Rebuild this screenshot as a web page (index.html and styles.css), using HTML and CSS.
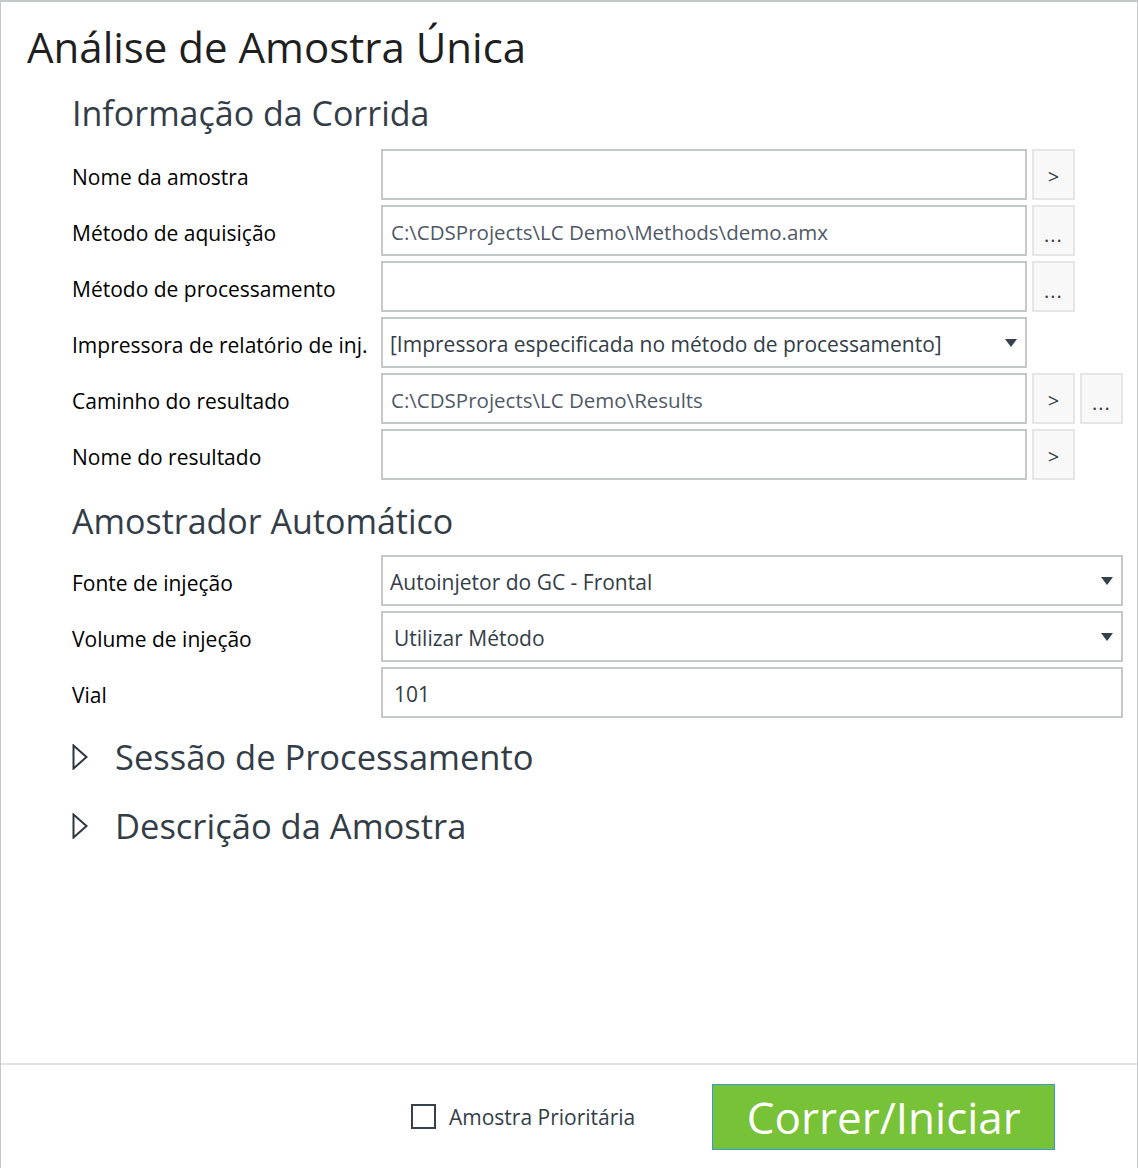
FILE: index.html
```html
<!DOCTYPE html>
<html lang="pt">
<head>
<meta charset="utf-8">
<link rel="stylesheet" href="styles.css">
</head>
<body>
<div class="window">
  <main class="content">
    <h1 class="title">Análise de Amostra Única</h1>
    <section class="section">
      <h2 class="heading">Informação da Corrida</h2>
      <div class="rows">
        <div class="row">
          <label class="label">Nome da amostra</label>
          <div class="field"></div>
          <button class="btn">&gt;</button>
        </div>
        <div class="row">
          <label class="label">Método de aquisição</label>
          <div class="field muted">C:\CDSProjects\LC Demo\Methods\demo.amx</div>
          <button class="btn dots">...</button>
        </div>
        <div class="row">
          <label class="label">Método de processamento</label>
          <div class="field"></div>
          <button class="btn dots">...</button>
        </div>
        <div class="row">
          <label class="label">Impressora de relatório de inj.</label>
          <div class="field select tight">[Impressora especificada no método de processamento]<span class="caret"></span></div>
        </div>
        <div class="row">
          <label class="label">Caminho do resultado</label>
          <div class="field muted">C:\CDSProjects\LC Demo\Results</div>
          <button class="btn">&gt;</button>
          <button class="btn dots">...</button>
        </div>
        <div class="row">
          <label class="label">Nome do resultado</label>
          <div class="field"></div>
          <button class="btn">&gt;</button>
        </div>
      </div>
    </section>
    <section class="section second">
      <h2 class="heading">Amostrador Automático</h2>
      <div class="rows">
        <div class="row">
          <label class="label">Fonte de injeção</label>
          <div class="field wide select tight">Autoinjetor do GC - Frontal<span class="caret"></span></div>
        </div>
        <div class="row">
          <label class="label">Volume de injeção</label>
          <div class="field wide select">Utilizar Método<span class="caret"></span></div>
        </div>
        <div class="row">
          <label class="label">Vial</label>
          <div class="field wide">101</div>
        </div>
      </div>
    </section>
    <div class="expander first">
      <svg class="tri" width="16" height="26" viewBox="0 0 16 26"><path d="M1.5 1.5 L14.5 13 L1.5 24.5 Z" fill="none" stroke="#2d3640" stroke-width="2" stroke-linejoin="miter"/></svg>
      <span class="exp-text">Sessão de Processamento</span>
    </div>
    <div class="expander">
      <svg class="tri" width="16" height="26" viewBox="0 0 16 26"><path d="M1.5 1.5 L14.5 13 L1.5 24.5 Z" fill="none" stroke="#2d3640" stroke-width="2" stroke-linejoin="miter"/></svg>
      <span class="exp-text">Descrição da Amostra</span>
    </div>
  </main>
  <footer class="footer">
    <label class="check">
      <span class="box"></span>
      <span class="check-text">Amostra Prioritária</span>
    </label>
    <button class="run">Correr/Iniciar</button>
  </footer>
</div>
</body>
</html>
```

FILE: styles.css
```css
* { box-sizing: border-box; }
html, body { margin: 0; padding: 0; background: #fff; }
body { font-family: "Open Sans", "Noto Sans", sans-serif; color: #333d47; }

.window {
  width: 1138px;
  height: 1168px;
  border-top: 2px solid #c5c8cb;
  border-left: 1px solid #c5c8cb;
  border-right: 1px solid #c5c8cb;
  display: flex;
  flex-direction: column;
}

.content { flex: 1; padding-top: 18px; }

.title {
  margin: 0 0 0 26px;
  font-size: 42px;
  font-weight: 400;
  line-height: 54px;
  color: #1f1f1f;
  letter-spacing: 0;
}

.section { padding-left: 71px; }
.heading {
  margin: 16px 0 13px;
  font-size: 34px;
  font-weight: 400;
  line-height: 46px;
  color: #333d47;
}
.second .heading { margin-top: 18px; margin-bottom: 11px; }

.rows { display: flex; flex-direction: column; gap: 5px; }
.row { display: flex; align-items: center; gap: 5px; height: 51px; }
.label {
  width: 304px;
  font-size: 21px;
  color: #000;
  padding-top: 4px;
  white-space: nowrap;
}
.field {
  width: 646px;
  height: 51px;
  border: 2px solid #c5c8cb;
  display: flex;
  align-items: center;
  padding: 3px 10px 0 11px;
  font-size: 21px;
  color: #333d47;
  position: relative;
  white-space: nowrap;
}
.field.wide { width: 742px; }
.field.tight { padding-left: 7px; }
.field.muted { color: #4f5966; padding-left: 8px; font-size: 20.5px; }
.caret {
  position: absolute;
  right: 8px;
  top: 20px;
  width: 0; height: 0;
  border-left: 6px solid transparent;
  border-right: 6px solid transparent;
  border-top: 8px solid #37414b;
}
.btn {
  width: 43px;
  height: 51px;
  border: 2px solid #e6e6e6;
  background: #f8f8f8;
  font-family: "Open Sans", sans-serif;
  font-size: 20px;
  color: #333d47;
  padding: 4px 0 0;
}
.btn.dots { padding-top: 8px; letter-spacing: 1px; }

.expander {
  display: flex;
  align-items: center;
  padding-left: 71px;
  gap: 27px;
  height: 46px;
  margin-top: 23px;
}
.expander.first { margin-top: 16px; }
.tri { flex: none; }
.exp-text {
  font-size: 34.5px;
  color: #333d47;
  line-height: 46px;
}

.footer {
  height: 105px;
  border-top: 2px solid #e3e3e3;
  display: flex;
  align-items: center;
  padding-left: 410px;
}
.check { display: flex; align-items: center; gap: 13px; }
.box {
  width: 25px; height: 25px;
  border: 2px solid #36414a;
}
.check-text { font-size: 21px; color: #333d47; }
.run {
  margin-left: 77px;
  width: 343px;
  height: 66px;
  background: #77c236;
  border: 1px solid #3a96d8;
  color: #fff;
  font-family: "Open Sans", sans-serif;
  font-size: 44px;
  padding: 0;
  line-height: 60px;
}
```
